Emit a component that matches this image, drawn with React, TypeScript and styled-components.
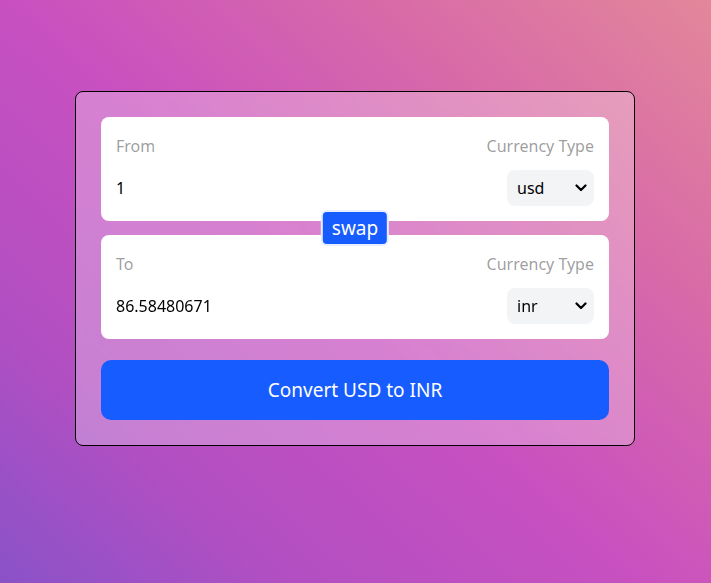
import React, { useState } from "react";
import styled, { createGlobalStyle } from "styled-components";

const GlobalStyle = createGlobalStyle`
  html, body { margin: 0; padding: 0; }
  body {
    font-family: "Noto Sans", "Open Sans", Arial, sans-serif;
    min-height: 100vh;
    background: linear-gradient(43deg, #8a52c8 0%, #b24fc2 22%, #c850c0 48%, #d86aa8 75%, #e3879a 100%);
    background-attachment: fixed;
  }
  * { box-sizing: border-box; }
`;

const Page = styled.div`
  width: 100%;
  min-height: 100vh;
  display: flex;
  justify-content: center;
  align-items: flex-start;
  padding: 91px 1px 0 0;
`;

const Card = styled.form`
  width: 560px;
  padding: 25px;
  border: 1px solid #000;
  border-radius: 8px;
  background: rgba(255, 255, 255, 0.28);
  backdrop-filter: blur(4px);
  display: flex;
  flex-direction: column;
`;

const Box = styled.div`
  background: #fff;
  border-radius: 8px;
  padding: 17px 15px 15px 15px;
  display: flex;
  flex-direction: column;
  gap: 12px;
`;

const Row = styled.div`
  display: flex;
  justify-content: space-between;
  align-items: center;
`;

const Label = styled.label`
  font-size: 16px;
  line-height: 24px;
  color: rgba(0, 0, 0, 0.4);
`;

const AmountInput = styled.input`
  border: none;
  outline: none;
  background: transparent;
  font: inherit;
  font-size: 16px;
  line-height: 24px;
  color: #000;
  padding: 0;
  width: 60%;
`;

const SelectWrap = styled.div`
  position: relative;
  width: 87px;
  height: 36px;
`;

const CurrencySelect = styled.select`
  appearance: none;
  -webkit-appearance: none;
  width: 100%;
  height: 100%;
  border: none;
  outline: none;
  border-radius: 8px;
  background-color: #f3f4f6;
  font-family: inherit;
  font-size: 16px;
  color: #000;
  padding: 0 24px 0 10px;
  cursor: pointer;
`;

const Chevron = styled.svg`
  position: absolute;
  right: 7px;
  top: 50%;
  width: 12px;
  height: 8px;
  transform: translateY(-50%);
  pointer-events: none;
`;

const SwapRail = styled.div`
  position: relative;
  height: 14px;
`;

const SwapButton = styled.button`
  position: absolute;
  left: 50%;
  top: 50%;
  transform: translate(-50%, -50%);
  height: 36px;
  border: 2px solid #e8eeff;
  border-radius: 6px;
  background: #175cff;
  color: #fff;
  font-family: inherit;
  font-size: 19px;
  line-height: 28px;
  padding: 0 9px;
  cursor: pointer;
`;

const ConvertButton = styled.button`
  margin-top: 21px;
  width: 100%;
  height: 60px;
  border: none;
  border-radius: 10px;
  background: #175cff;
  color: #fff;
  font-family: inherit;
  font-size: 19px;
  cursor: pointer;
`;

type InputBoxProps = {
  label: string;
  amount: string;
  currency: string;
};

function InputBox({ label, amount, currency }: InputBoxProps) {
  return (
    <Box>
      <Row>
        <Label>{label}</Label>
        <Label>Currency Type</Label>
      </Row>
      <Row>
        <AmountInput type="text" defaultValue={amount} />
        <SelectWrap>
          <CurrencySelect defaultValue={currency}>
            <option value="usd">usd</option>
            <option value="inr">inr</option>
            <option value="eur">eur</option>
          </CurrencySelect>
          <Chevron viewBox="0 0 12 8">
            <path d="M1.5 1.5 L6 6 L10.5 1.5" fill="none" stroke="#000" strokeWidth="2.2" strokeLinecap="round" strokeLinejoin="round" />
          </Chevron>
        </SelectWrap>
      </Row>
    </Box>
  );
}

export default function App() {
  const [from] = useState("usd");
  const [to] = useState("inr");
  return (
    <>
      <GlobalStyle />
      <Page>
        <Card onSubmit={(e) => e.preventDefault()}>
          <InputBox label="From" amount="1" currency={from} />
          <SwapRail>
            <SwapButton type="button">swap</SwapButton>
          </SwapRail>
          <InputBox label="To" amount="86.58480671" currency={to} />
          <ConvertButton type="submit">
            Convert {from.toUpperCase()} to {to.toUpperCase()}
          </ConvertButton>
        </Card>
      </Page>
    </>
  );
}
